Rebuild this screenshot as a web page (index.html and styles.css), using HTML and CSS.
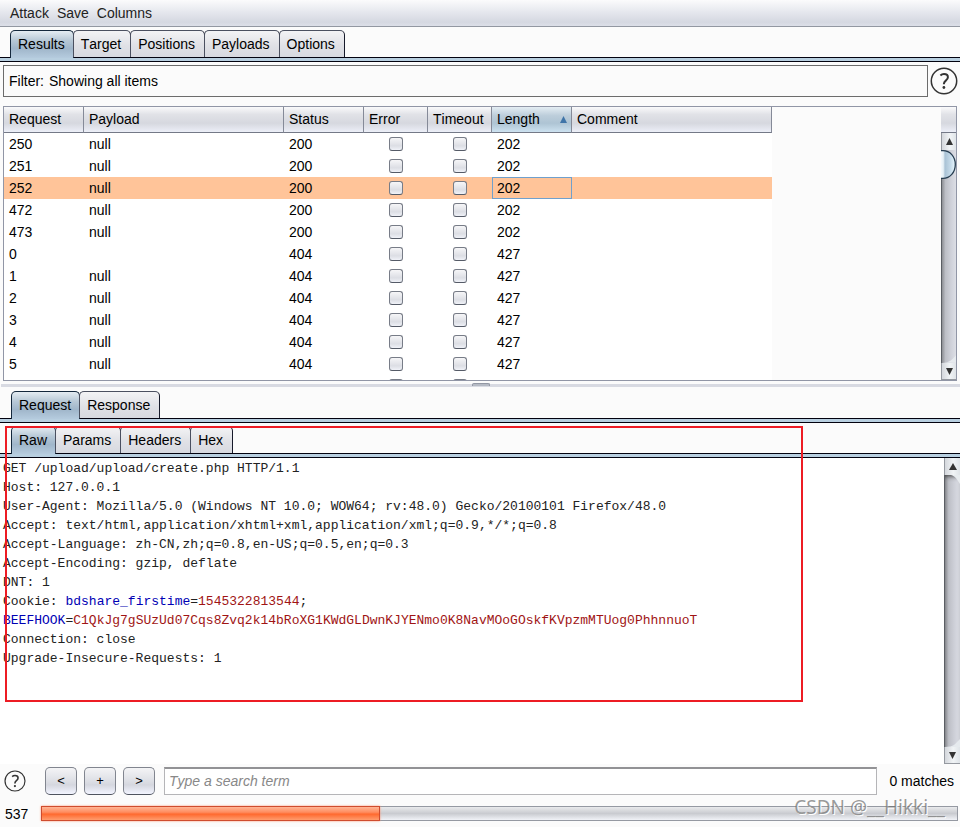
FILE: index.html
```html
<!DOCTYPE html>
<html lang="en">
<head>
<meta charset="utf-8">
<title>Intruder attack</title>
<link rel="stylesheet" href="styles.css">
</head>
<body>
<div class="app">
  <nav class="menubar">
    <button type="button">Attack</button>
    <button type="button">Save</button>
    <button type="button">Columns</button>
  </nav>

  <div class="tabs" role="tablist">
    <button type="button" class="tab active" role="tab">Results</button>
    <button type="button" class="tab" role="tab">Target</button>
    <button type="button" class="tab" role="tab">Positions</button>
    <button type="button" class="tab" role="tab">Payloads</button>
    <button type="button" class="tab" role="tab">Options</button>
  </div>

  <div class="filter-row">
    <button type="button" class="filter"><span>Filter:</span><span>Showing all items</span></button>
    <button type="button" class="help" aria-label="Help">
      <svg width="28" height="28" viewBox="0 0 28 28"><circle cx="14" cy="14" r="12.7"/><path d="M10.4 8.4c1-.9 2.200-1.300 3.600-1.300 2.400 0 3.900 1.200 3.900 3.200 0 1.500-.8 2.300-2.100 3.300-1.300 1-1.900 1.700-1.900 3.200v.5"/><circle class="dot" cx="13.900" cy="20.500" r="1.400"/></svg>
    </button>
  </div>

  <section class="results">
    <div class="table-view">
      <table>
        <colgroup><col class="c80"><col class="c200"><col class="c80"><col class="c64"><col class="c64"><col class="c80"><col class="c200"></colgroup>
        <thead>
          <tr><th>Request</th><th>Payload</th><th>Status</th><th>Error</th><th>Timeout</th>
          <th class="sorted" aria-sort="ascending"><div class="sort">Length <svg width="7" height="7" viewBox="0 0 7 7"><path d="M3.500 0L7 7H0z"/></svg></div></th><th>Comment</th></tr>
        </thead>
        <tbody>
          <tr><td>250</td><td>null</td><td>200</td><td class="check"><input type="checkbox" aria-label="Error"></td><td class="check"><input type="checkbox" aria-label="Timeout"></td><td>202</td><td></td></tr>
          <tr><td>251</td><td>null</td><td>200</td><td class="check"><input type="checkbox" aria-label="Error"></td><td class="check"><input type="checkbox" aria-label="Timeout"></td><td>202</td><td></td></tr>
          <tr class="selected"><td>252</td><td>null</td><td>200</td><td class="check"><input type="checkbox" aria-label="Error"></td><td class="check"><input type="checkbox" aria-label="Timeout"></td><td class="focus">202</td><td></td></tr>
          <tr><td>472</td><td>null</td><td>200</td><td class="check"><input type="checkbox" aria-label="Error"></td><td class="check"><input type="checkbox" aria-label="Timeout"></td><td>202</td><td></td></tr>
          <tr><td>473</td><td>null</td><td>200</td><td class="check"><input type="checkbox" aria-label="Error"></td><td class="check"><input type="checkbox" aria-label="Timeout"></td><td>202</td><td></td></tr>
          <tr><td>0</td><td></td><td>404</td><td class="check"><input type="checkbox" aria-label="Error"></td><td class="check"><input type="checkbox" aria-label="Timeout"></td><td>427</td><td></td></tr>
          <tr><td>1</td><td>null</td><td>404</td><td class="check"><input type="checkbox" aria-label="Error"></td><td class="check"><input type="checkbox" aria-label="Timeout"></td><td>427</td><td></td></tr>
          <tr><td>2</td><td>null</td><td>404</td><td class="check"><input type="checkbox" aria-label="Error"></td><td class="check"><input type="checkbox" aria-label="Timeout"></td><td>427</td><td></td></tr>
          <tr><td>3</td><td>null</td><td>404</td><td class="check"><input type="checkbox" aria-label="Error"></td><td class="check"><input type="checkbox" aria-label="Timeout"></td><td>427</td><td></td></tr>
          <tr><td>4</td><td>null</td><td>404</td><td class="check"><input type="checkbox" aria-label="Error"></td><td class="check"><input type="checkbox" aria-label="Timeout"></td><td>427</td><td></td></tr>
          <tr><td>5</td><td>null</td><td>404</td><td class="check"><input type="checkbox" aria-label="Error"></td><td class="check"><input type="checkbox" aria-label="Timeout"></td><td>427</td><td></td></tr>
          <tr><td></td><td></td><td></td><td class="check"><input type="checkbox" aria-label="Error"></td><td class="check"><input type="checkbox" aria-label="Timeout"></td><td></td><td></td></tr>
        </tbody>
      </table>
    </div>
    <div class="side">
      <div class="corner"></div>
      <div class="scrollbar">
        <div class="cap top"><svg width="7" height="7" viewBox="0 0 7 7"><path d="M3.500 0L7 7H0z"/></svg></div>
        <div class="track"><svg class="thumb" width="15" height="29" viewBox="0 0 15 29"><defs><linearGradient id="glass"><stop offset="0" stop-color="#f4f9fc"/><stop offset=".16" stop-color="#e6f0f6"/><stop offset=".28" stop-color="#a9c2d5"/><stop offset=".65" stop-color="#c3d9e8"/><stop offset="1" stop-color="#e8f7ff"/></linearGradient></defs><path d="M0 .7h2c7 0 12.300 6 12.300 13.800S9 28.300 2 28.300H0" fill="url(#glass)" stroke="#263d50" stroke-width="1.300"/></svg></div>
        <div class="cap bottom"><svg class="curve" width="15" height="8" viewBox="0 0 15 8"><path d="M0 8C9 8 10 5 15 0V8z"/></svg><svg width="7" height="7" viewBox="0 0 7 7"><path d="M0 0H7L3.500 7z"/></svg></div>
      </div>
    </div>
  </section>

  <div class="splitter"><span class="grip"></span></div>

  <div class="tabs inner" role="tablist">
    <button type="button" class="tab active" role="tab">Request</button>
    <button type="button" class="tab" role="tab">Response</button>
  </div>

  <section class="message">
    <div class="tabs inner" role="tablist">
      <button type="button" class="tab active" role="tab">Raw</button>
      <button type="button" class="tab" role="tab">Params</button>
      <button type="button" class="tab" role="tab">Headers</button>
      <button type="button" class="tab" role="tab">Hex</button>
    </div>
    <div class="editor">
<pre>GET /upload/upload/create.php HTTP/1.1
Host: 127.0.0.1
User-Agent: Mozilla/5.0 (Windows NT 10.0; WOW64; rv:48.0) Gecko/20100101 Firefox/48.0
Accept: text/html,application/xhtml+xml,application/xml;q=0.9,*/*;q=0.8
Accept-Language: zh-CN,zh;q=0.8,en-US;q=0.5,en;q=0.3
Accept-Encoding: gzip, deflate
DNT: 1
Cookie: <span class="name">bdshare_firstime</span>=<span class="value">1545322813544</span>;
<span class="name">BEEFHOOK</span>=<span class="value">C1QkJg7gSUzUd07Cqs8Zvq2k14bRoXG1KWdGLDwnKJYENmo0K8NavMOoGOskfKVpzmMTUog0PhhnnuoT</span>
Connection: close
Upgrade-Insecure-Requests: 1</pre>
      <div class="scrollbar wide">
        <div class="cap top"><svg width="8" height="7" viewBox="0 0 8 7"><path d="M4 0L8 7H0z"/></svg></div>
        <div class="track"><svg class="shoulder" width="15" height="9" viewBox="0 0 15 9"><path d="M0 0H6C10 1 12 4 15 9V0z"/></svg></div>
        <div class="cap bottom"><svg class="curve" width="15" height="8" viewBox="0 0 15 8"><path d="M0 8C9 8 10 5 15 0V8z"/></svg><svg width="7" height="7" viewBox="0 0 7 7"><path d="M0 0H7L3.500 7z"/></svg></div>
      </div>
    </div>
    <div class="highlight"></div>
  </section>

  <div class="search">
    <button type="button" class="help" aria-label="Search help">
      <svg width="22" height="22" viewBox="0 0 28 28"><circle cx="14" cy="14" r="12.700"/><path d="M10.400 8.400c1-.9 2.200-1.300 3.600-1.300 2.400 0 3.900 1.200 3.900 3.200 0 1.500-.8 2.300-2.100 3.300-1.300 1-1.900 1.700-1.900 3.200v.5"/><circle class="dot" cx="13.900" cy="20.500" r="1.400"/></svg>
    </button>
    <div class="steps">
      <button type="button" class="step">&lt;</button>
      <button type="button" class="step">+</button>
      <button type="button" class="step">&gt;</button>
    </div>
    <input type="text" class="term" placeholder="Type a search term" aria-label="Search term">
    <span class="matches">0 matches</span>
  </div>

  <footer class="status">
    <span class="count">537</span>
    <div class="progress"><div class="fill" style="width:37%"></div></div>
    <span class="watermark">CSDN @__Hikki__</span>
  </footer>
</div>
</body>
</html>
```
FILE: styles.css
```css
* { box-sizing: border-box; }

body {
  margin: 0;
  background: #fbfbfb;
  color: #000;
  font: 14px/18px "Liberation Sans", Arial, sans-serif;
  font-kerning: none;
}

button, input {
  margin: 0;
  padding: 0;
  border: 0;
  background: none;
  color: inherit;
  font: inherit;
  font-kerning: none;
}

svg { display: block; }

.app {
  display: flex;
  flex-direction: column;
  min-height: 100vh;
  overflow: hidden;
}

/* Menu */
.menubar {
  display: flex;
  gap: 8px;
  height: 27px;
  padding-left: 10px;
  border-bottom: 1px solid #9297a1;
  background: linear-gradient(#fbfbfc, #e6e8ee 45%, #d5d8e1 85%, #dcdfe8);
}

.menubar button { color: #222; }

/* Tab strips */
.tabs {
  display: flex;
  height: 35px;
  padding: 3px 0 0 10px;
  border-bottom: 1px solid #02020f;
  background: linear-gradient(#02020f, #02020f) 0 30px / 100% 1px no-repeat,
              linear-gradient(#b8cfe0, #b8cfe0) 0 31px / 100% 3px no-repeat;
}

.tabs.inner { padding-left: 11px; }

.tab {
  height: 27px;
  margin-right: -1px;
  padding: 0 9px 0 7px;
  border: 1px solid #4b5060;
  border-right-color: #161a2a;
  border-bottom: 0;
  border-radius: 5px 5px 0 0;
  background: linear-gradient(#f3f3f5, #e0e1e6 55%, #d7d9e0);
}

.tab.active {
  height: 28px;
  padding: 0 8px 1px 7px;
  border-color: #14283c;
  background: linear-gradient(#e4ecf2, #b7c8d6 35%, #a0b6ca 65%, #b5cbde);
}

/* Filter */
.filter-row {
  display: flex;
  align-items: center;
  gap: 2px;
  padding: 3px 2px 0 3px;
}

.filter {
  display: flex;
  flex: 1;
  align-items: center;
  gap: 5px;
  height: 32px;
  padding-left: 5px;
  border: 1px solid #6c6c6c;
}

.help circle, .help path {
  fill: none;
  stroke: #333;
  stroke-width: 1.500;
}

.help path { stroke-width: 2; }
.help .dot { fill: #333; stroke: none; }

/* Results */
.results {
  display: flex;
  flex: 0 0 275px;
  margin: 9px 3px 0;
  border: 1px solid #9196a6;
}

.table-view {
  flex: 1;
  height: 273px;
  overflow: hidden;
}

table {
  width: 768px;
  table-layout: fixed;
  border-collapse: separate;
  border-spacing: 0;
  background: #fff;
}

.c64 { width: 64px; }
.c80 { width: 80px; }
.c200 { width: 200px; }

th, .corner {
  height: 26px;
  border-bottom: 1px solid #747987;
  background: linear-gradient(#fafafb, #e1e2e7 30%, #d6d8df 65%, #eceff8);
}

th {
  padding: 0 0 1px 5px;
  border-right: 1px solid #858a98;
  font-weight: normal;
  text-align: left;
  white-space: nowrap;
}

th.sorted { background: linear-gradient(#e4edf3, #bccdda 35%, #aec4d4 65%, #cde2f0); }

.sort {
  display: flex;
  align-items: center;
  justify-content: space-between;
  padding-right: 4px;
}

.sort svg { fill: #3f74a8; }

td {
  height: 22px;
  padding: 0 0 0 5px;
}

td.check {
  padding: 4px 0 0;
  vertical-align: top;
}

.check input {
  display: block;
  appearance: none;
  width: 14px;
  height: 14px;
  margin: 0 auto;
  border: 1px solid #777c87;
  border-bottom-color: #555b67;
  border-radius: 3px;
  background: linear-gradient(#f6f6f8, #dcdee4 65%, #f0f2f8);
}

.selected td { background: #ffc499; }

td.focus {
  padding-left: 4px;
  border: 1px solid #70a0cc;
}

/* Scroll bars */
.side {
  display: flex;
  flex-direction: column;
  flex: 0 0 15px;
}

.scrollbar {
  display: flex;
  flex: 1;
  flex-direction: column;
}

.scrollbar.wide { flex: 0 0 16px; }

.track {
  flex: 1;
  border-left: 1px solid #5b5e64;
  background: linear-gradient(90deg, #8d8f94, #bdbfc6 25%, #cfd1d9 65%, #dcdee5);
}

.wide .track { box-shadow: inset 0 4px 5px -3px #333; }

.cap {
  display: flex;
  position: relative;
  align-items: center;
  justify-content: center;
  height: 17px;
  border-left: 1px solid #9599a0;
  background: linear-gradient(90deg, #d4d7dc, #f1f4f6 55%, #dfe4e8);
  fill: #333;
}

.cap.bottom { border-bottom: 1px solid #9599a0; }

/* The end caps curve into the track. */
.curve {
  position: absolute;
  bottom: 100%;
  left: 0;
  fill: #e6eaee;
}

.side .curve { width: 14px; }

.thumb { margin-left: -1px; }
.shoulder { fill: #e8ecef; }

/* Splitter */
.splitter {
  display: flex;
  justify-content: center;
  height: 7px;
  margin-left: 1px;
  background: linear-gradient(#d8dae2, #d8dae2) 0 3px / 100% 3px no-repeat;
}

.grip {
  width: 18px;
  height: 3px;
  margin-top: 2px;
  border: 1px solid #9297a3;
  border-bottom: 0;
  border-radius: 2px 2px 0 0;
  background: #b5bac4;
}

/* Message */
.message {
  display: flex;
  position: relative;
  flex: 1;
  flex-direction: column;
}

.editor {
  display: flex;
  flex: 1;
  background: #fff;
}

pre {
  flex: 1;
  margin: 0;
  padding: 1px 0 0 3px;
  color: #222;
  font: 13px/19px "Liberation Mono", "Courier New", monospace;
}

.name { color: #0000b4; }
.value { color: #a01414; }

.highlight {
  position: absolute;
  top: 3px;
  left: 5px;
  width: 798px;
  height: 276px;
  border: 2px solid #ed1c24;
  pointer-events: none;
}

/* Search */
.search {
  display: flex;
  align-items: center;
  padding: 3px 6px 0 4px;
}

.steps {
  display: flex;
  gap: 7px;
  margin: 0 9px 0 19px;
}

.step {
  width: 32px;
  height: 28px;
  border: 1px solid #81858f;
  border-bottom-color: #4e535e;
  border-radius: 5px;
  background: linear-gradient(#f4f4f6, #dddfe5 50%, #d5d7df 65%, #f2f4ff);
  font-size: 13px;
}

.term {
  flex: 1;
  height: 28px;
  padding: 0 4px 1px;
  border: 1px solid #b5b5b8;
  border-top: 2px solid #929295;
  background: #fff;
}

.term::placeholder {
  color: #888;
  font-style: italic;
  opacity: 1;
}

.matches { margin-left: 12px; }

/* Status */
.status {
  display: flex;
  position: relative;
  align-items: center;
  gap: 13px;
  height: 32px;
  padding: 5px 2px 0 5px;
}

.progress {
  flex: 1;
  height: 15px;
  border: 1px solid #9599a2;
  background: linear-gradient(#e9eaec, #c9cbd0 50%, #f1f3f8);
}

.fill {
  height: 15px;
  margin: -1px 0 0 -1px;
  border: 1px solid #cf4c2e;
  background: linear-gradient(#ffb595, #ff8d60 40%, #ff692f 55%, #ff9c6d);
  box-shadow: 0 0 2px #ff9575;
}

.watermark {
  position: absolute;
  right: 15px;
  bottom: 9px;
  color: rgba(110, 110, 110, 0.700);
  font: 19px/22px "Noto Sans", sans-serif;
  text-shadow: 1px 1px 0 #fff;
}
```
